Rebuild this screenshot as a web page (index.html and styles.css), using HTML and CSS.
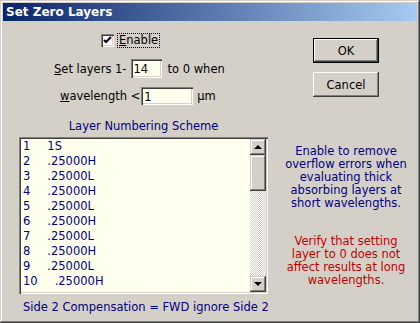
FILE: index.html
```html
<!DOCTYPE html>
<html lang="en">
<head>
    <meta charset="UTF-8">
    <meta name="viewport" content="width=device-width, initial-scale=1.0">
    <title>Set Zero Layers</title>
    <link rel="stylesheet" href="styles.css">
</head>
<body>
    <div class="window">
        <div class="titlebar">Set Zero Layers</div>
        <div class="content">
            <div class="left">
                <div class="row row-enable">
                    <span class="checkbox">
                        <svg width="9" height="9" viewBox="0 0 9 9"><path d="M1 4 L3 6 L8 1" fill="none" stroke="#000" stroke-width="2"/></svg>
                    </span>
                    <span class="focus"><u>E</u>nable</span>
                </div>
                <div class="row row-layers">
                    <span><u>S</u>et layers 1-</span>
                    <span class="field field-layers">14</span>
                    <span class="after">to 0 when</span>
                </div>
                <div class="row row-wave">
                    <span><u>w</u>avelength &lt;</span>
                    <span class="field field-wave">1</span>
                    <span class="after">µm</span>
                </div>
                <div class="caption">Layer Numbering Scheme</div>
                <div class="listbox">
                    <ul class="items">
                        <li><span class="num">1</span>1S</li>
                        <li><span class="num">2</span>.25000H</li>
                        <li><span class="num">3</span>.25000L</li>
                        <li><span class="num">4</span>.25000H</li>
                        <li><span class="num">5</span>.25000L</li>
                        <li><span class="num">6</span>.25000H</li>
                        <li><span class="num">7</span>.25000L</li>
                        <li><span class="num">8</span>.25000H</li>
                        <li><span class="num">9</span>.25000L</li>
                        <li><span class="num">10</span>.25000H</li>
                    </ul>
                    <div class="scrollbar">
                        <div class="sb-btn"><span class="arrow up"></span></div>
                        <div class="sb-thumb"></div>
                        <div class="sb-track"></div>
                        <div class="sb-btn"><span class="arrow down"></span></div>
                    </div>
                </div>
                <div class="footer">Side 2 Compensation = FWD ignore Side 2</div>
            </div>
            <div class="right">
                <button class="btn default">OK</button>
                <button class="btn">Cancel</button>
                <p class="note blue">Enable to remove<br>overflow errors when<br>evaluating thick<br>absorbing layers at<br>short wavelengths.</p>
                <p class="note red">Verify that setting<br>layer to 0 does not<br>affect results at long<br>wavelengths.</p>
            </div>
        </div>
    </div>
</body>
</html>
```

FILE: styles.css
```css
body {
    margin: 0;
    font-family: "DejaVu Sans", Verdana, sans-serif;
    font-size: 11.5px;
    color: #000;
}
.window {
    width: 420px;
    height: 323px;
    box-sizing: border-box;
    padding: 3px;
    background-color: #d4d0c8;
    box-shadow: inset -1px -1px #404040, inset 1px 1px #d4d0c8, inset -2px -2px #808080, inset 2px 2px #fff;
}
.titlebar {
    height: 18px;
    line-height: 18px;
    padding-left: 3px;
    font-weight: bold;
    font-size: 12px;
    color: white;
    background: linear-gradient(to right, #0a246a, #a6caf0);
}
.content {
    display: flex;
    padding-left: 16px;
}
.left {
    width: 249px;
}
.row {
    display: flex;
    align-items: center;
}
.row-enable {
    margin-top: 12px;
    height: 15px;
    padding-left: 82px;
}
.checkbox {
    width: 13px;
    height: 13px;
    box-sizing: border-box;
    display: flex;
    align-items: center;
    justify-content: center;
    background-color: white;
    box-shadow: inset 1px 1px #808080, inset 2px 2px #404040, inset -1px -1px #fff, inset -2px -2px #d4d0c8;
}
.focus {
    margin-left: 4px;
    padding: 0 1px;
    line-height: 13px;
    outline: 1px dotted #000;
}
.row-layers {
    margin-top: 11px;
    height: 19px;
    padding-left: 35px;
}
.row-wave {
    margin-top: 9px;
    height: 18px;
    padding-left: 41px;
}
.field {
    box-sizing: border-box;
    height: 100%;
    margin-left: 4px;
    padding: 3px 0 0 3px;
    background-color: #ffffee;
    box-shadow: inset 1px 1px #808080, inset 2px 2px #404040, inset -1px -1px #fff, inset -2px -2px #d4d0c8;
}
.field-layers {
    width: 31px;
}
.field-wave {
    width: 52px;
    margin-left: 1px;
}
.after {
    margin-left: 6px;
}
.row-wave .after {
    margin-left: 4px;
}
.caption {
    margin-top: 15px;
    line-height: 13px;
    text-align: center;
    color: #000080;
}
.listbox {
    display: flex;
    margin-top: 4px;
    height: 157px;
    box-sizing: border-box;
    padding: 2px;
    background-color: #ffffee;
    box-shadow: inset 1px 1px #808080, inset 2px 2px #404040, inset -1px -1px #fff, inset -2px -2px #d4d0c8;
}
.items {
    flex: 1;
    margin: 0;
    padding: 0 0 0 2px;
    list-style: none;
    line-height: 15px;
    color: #000080;
}
.num {
    display: inline-block;
    margin-right: 17px;
}
.scrollbar {
    width: 16px;
    display: flex;
    flex-direction: column;
}
.sb-btn, .sb-thumb {
    box-sizing: border-box;
    background-color: #d4d0c8;
    box-shadow: inset -1px -1px #404040, inset 1px 1px #d4d0c8, inset -2px -2px #808080, inset 2px 2px #fff;
}
.sb-btn {
    height: 16px;
    display: flex;
    align-items: center;
    justify-content: center;
}
.sb-thumb {
    height: 36px;
}
.sb-track {
    flex: 1;
    background: repeating-conic-gradient(#fff 0 25%, #d4d0c8 0 50%) 0 0 / 2px 2px;
}
.arrow {
    width: 0;
    height: 0;
    border-left: 4px solid transparent;
    border-right: 4px solid transparent;
}
.arrow.up {
    border-bottom: 4px solid #000;
}
.arrow.down {
    border-top: 4px solid #000;
}
.footer {
    margin-top: 7px;
    padding-left: 4px;
    line-height: 13px;
    white-space: nowrap;
    color: #000080;
}
.right {
    width: 130px;
    margin-left: 13px;
    display: flex;
    flex-direction: column;
    align-items: center;
}
.btn {
    width: 66px;
    height: 25px;
    margin-top: 9px;
    padding: 0;
    border: none;
    font-family: inherit;
    font-size: 11.5px;
    color: #000;
    background-color: #d4d0c8;
    box-shadow: inset -1px -1px #404040, inset 1px 1px #fff, inset -2px -2px #808080;
}
.btn.default {
    margin-top: 17px;
    box-shadow: inset 0 0 0 1px #000, inset -2px -2px #404040, inset 2px 2px #fff, inset -3px -3px #808080;
}
.note {
    margin: 48px 0 0;
    line-height: 13px;
    text-align: center;
}
.note.blue {
    color: #000080;
}
.note.red {
    margin-top: 25px;
    color: #c00000;
}
```
